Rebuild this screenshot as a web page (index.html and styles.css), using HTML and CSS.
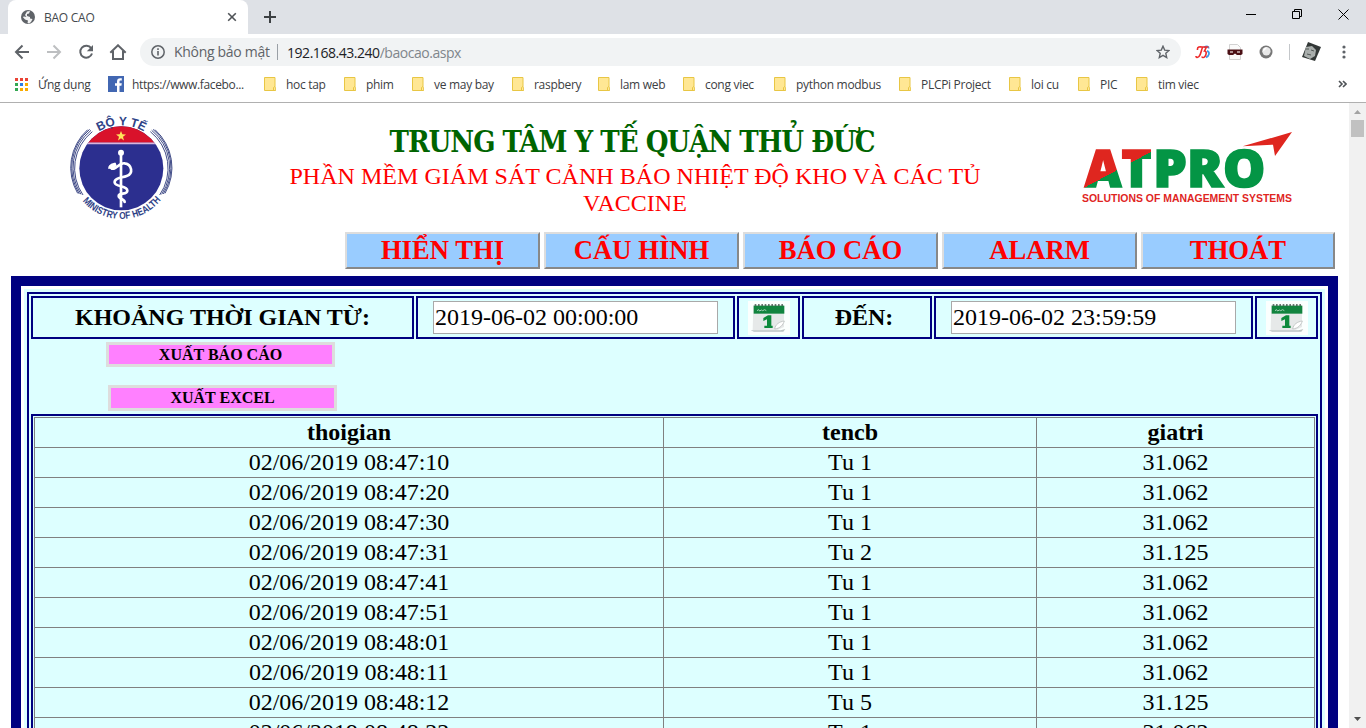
FILE: index.html
```html
<!DOCTYPE html>
<html lang="vi">
<head>
<meta charset="utf-8">
<title>BAO CAO</title>
<link rel="stylesheet" href="styles.css">
</head>
<body>
<svg width="0" height="0" class="defs">
  <defs>
    <symbol id="folder" viewBox="0 0 12 14"><path d="M.5.5h10.500v9l.7.800v3.200H.5z" fill="#ffe794" stroke="#e8c644"/><path d="M9.500 13.500v-3l1.500-1" fill="none" stroke="#e8c644"/></symbol>
    <symbol id="calendar" viewBox="0 0 126 102">
      <rect width="126" height="102" fill="#fbfffe"/>
      <path d="M16 12h92v66l-22 10H14z" fill="#e6e9e9"/>
      <path d="M8 88h90l14-4-6 8H18z" fill="#bcc4c3"/>
      <path d="M17 14h92v24H17z" fill="#12843f"/>
      <path d="M20 12h86" stroke="#3c4f45" stroke-width="5" stroke-dasharray="5 5"/>
      <path d="M27 29l5-3 3 4 5-3 4 2 6-3 5 3" stroke="#a4d2b6" stroke-width="3" fill="none"/>
      <path d="M46 51l14-8h10v31h4v7H49v-7h8V55l-11 5z" fill="#0d8a3c"/>
      <path d="M80 84c2-14 14-22 29-24-4 12-12 22-29 24z" fill="#fff" stroke="#c4c9c8" stroke-width="3"/>
    </symbol>
  </defs>
</svg>
<div class="window">
  <div class="tabstrip">
    <div class="tab">
      <svg width="16" height="16" viewBox="0 0 16 16"><circle cx="8" cy="8" r="7" fill="#5f6368"/><path d="M7 2.500l3-.5-1 2.500-2 .5v2l3 1v1.500l2.500.5-1.500 3-2 1.500-1.500-.5.500-2.500-3-1L2.800 8 4 7.500 6.500 8 5 6z" fill="#fff" opacity=".92"/></svg>
      <span class="tab-title">BAO CAO</span>
      <svg width="10" height="10" viewBox="0 0 10 10"><path d="M1.200 1.200l7.600 7.600M8.800 1.200L1.200 8.800" stroke="#4f5357" stroke-width="1.600"/></svg>
    </div>
    <svg class="plus" width="14" height="14" viewBox="0 0 14 14"><path d="M7 1v12M1 7h12" stroke="#3c4043" stroke-width="2"/></svg>
    <div class="winbtns">
      <svg width="11" height="11" viewBox="0 0 11 11"><path d="M0 5.500h10" stroke="#000"/></svg>
      <svg width="11" height="11" viewBox="0 0 11 11"><path d="M.5 2.500h7v7h-7zM2.500 2.500v-2h7v7h-2" stroke="#000" fill="none"/></svg>
      <svg width="11" height="11" viewBox="0 0 11 11"><path d="M.5.5l10 10M10.500.5l-10 10" stroke="#000"/></svg>
    </div>
  </div>
  <div class="toolbar">
    <svg width="16" height="16" viewBox="0 0 16 16"><path d="M15 8H2.500M8.500 1.500L2 8l6.500 6.500" fill="none" stroke="#5f6368" stroke-width="2"/></svg>
    <svg width="16" height="16" viewBox="0 0 16 16"><path d="M1 8h12.500M7.500 1.500L14 8l-6.500 6.500" fill="none" stroke="#bdbfc1" stroke-width="2"/></svg>
    <svg width="16" height="16" viewBox="0 0 16 16"><path d="M13.200 4.200A6 6 0 1 0 14 9.500" fill="none" stroke="#5f6368" stroke-width="2"/><path d="M15 1v6.200H8.800z" fill="#5f6368"/></svg>
    <svg class="home" width="18" height="16" viewBox="0 0 18 16"><path d="M1.300 8.800L9 1.300l7.700 7.500M4 7v8h10V7" fill="none" stroke="#5f6368" stroke-width="2"/></svg>
    <div class="omnibox">
      <svg width="14" height="14" viewBox="0 0 14 14"><circle cx="7" cy="7" r="6.200" fill="none" stroke="#5f6368" stroke-width="1.500"/><path d="M7 6v4.500M7 3.300v1.600" stroke="#5f6368" stroke-width="1.600"/></svg>
      <span class="unsafe">Không bảo mật</span>
      <span class="url"><span class="host">192.168.43.240</span><span class="path">/baocao.aspx</span></span>
      <svg class="star" width="14" height="14" viewBox="0 0 14 14"><path d="M7 1.200l1.700 3.900 4.300.4-3.200 2.800.9 4.200L7 10.300l-3.700 2.200.9-4.200L1 5.500l4.300-.4z" fill="none" stroke="#5f6368" stroke-width="1.400"/></svg>
    </div>
    <div class="extensions">
      <svg width="16" height="14" viewBox="0 0 16 14"><path d="M9 2.500c3-2 5-1 4.500 1M12 6c2.500.5 2.500 3 1 5l-2 1.500" fill="none" stroke="#3f9be8" stroke-width="1.800"/><path d="M2.500 5C2 1.500 5 1.800 7 2h6.500M8 2C6 4 6.500 9 4 11.500 2.500 13 .8 12.500 1 11M11.500 2L9.500 6c2.500 0 2 4 0 6-1 1-2.500.5-2.500-.5" fill="none" stroke="#ee2a2a" stroke-width="1.600"/></svg>
      <svg width="16" height="16" viewBox="0 0 16 16"><path d="M2.500.5h8l3 3v12h-11z" fill="#fafafa" stroke="#d2d2d2"/><path d="M.5 5.500h15V10l-1.500 1h-4L8 9.500 6 11H2L.5 10z" fill="#4b1015"/><path d="M3 8h3M10 8h3" stroke="#cdb9b9" stroke-width="1.400"/></svg>
      <svg width="14" height="14" viewBox="0 0 14 14"><circle cx="7" cy="7" r="6.500" fill="#777"/><circle cx="7.400" cy="6.300" r="4.200" fill="#e9e9e9"/><path d="M4 6.500A4 4 0 0 1 8 2.500L6 5z" fill="#fff"/></svg>
      <i class="sep"></i>
      <svg class="avatar" width="19" height="20" viewBox="0 0 19 20"><path d="M6 0l13 5-6 14L0 15z" fill="#333837"/><path d="M4 5l6-1 4 4-1 6-5 3-6-3z" fill="#a9aeac"/><path d="M4 7h3M9 8l3 1M5 12l4 1" stroke="#525856"/></svg>
      <svg width="4" height="14" viewBox="0 0 4 14" fill="#5f6368"><circle cx="2" cy="2" r="1.600"/><circle cx="2" cy="7" r="1.600"/><circle cx="2" cy="12" r="1.600"/></svg>
    </div>
  </div>
  <div class="bookmarks">
    <div class="bm apps"><svg width="13" height="13" viewBox="0 0 13 13"><path d="M0 0h3v3H0zM5 0h3v3H5zM10 0h3v3h-3z" fill="#ea4335"/><path d="M0 5h3v3H0zM0 10h3v3H0z" fill="#34a853"/><path d="M5 5h3v3H5z" fill="#2a7de9"/><path d="M10 5h3v3h-3zM5 10h3v3H5zM10 10h3v3h-3z" fill="#f9ab00"/></svg><span>Ứng dụng</span></div>
    <div class="bm fb"><svg width="16" height="16" viewBox="0 0 16 16"><path d="M0 0h16v16H0z" fill="#4267b2"/><path d="M9 16V9.800H7V7.300h2V5.500C9 3.400 10.300 2.300 12.200 2.300h1.600v2.200h-1.200c-.9 0-1.100.5-1.100 1.200v1.600h2.300l-.4 2.500h-1.900V16z" fill="#fff"/></svg><span>https://www.facebo...</span></div>
    <div class="bm"><svg width="12" height="14"><use href="#folder"/></svg><span>hoc tap</span></div>
    <div class="bm"><svg width="12" height="14"><use href="#folder"/></svg><span>phim</span></div>
    <div class="bm"><svg width="12" height="14"><use href="#folder"/></svg><span>ve may bay</span></div>
    <div class="bm"><svg width="12" height="14"><use href="#folder"/></svg><span>raspbery</span></div>
    <div class="bm"><svg width="12" height="14"><use href="#folder"/></svg><span>lam web</span></div>
    <div class="bm"><svg width="12" height="14"><use href="#folder"/></svg><span>cong viec</span></div>
    <div class="bm"><svg width="12" height="14"><use href="#folder"/></svg><span>python modbus</span></div>
    <div class="bm"><svg width="12" height="14"><use href="#folder"/></svg><span>PLCPi Project</span></div>
    <div class="bm"><svg width="12" height="14"><use href="#folder"/></svg><span>loi cu</span></div>
    <div class="bm"><svg width="12" height="14"><use href="#folder"/></svg><span>PIC</span></div>
    <div class="bm"><svg width="12" height="14"><use href="#folder"/></svg><span>tim viec</span></div>
    <svg width="9" height="8" viewBox="0 0 9 8"><path d="M1 1l3 3-3 3M5 1l3 3-3 3" fill="none" stroke="#4f5357" stroke-width="1.600"/></svg>
  </div>
  <div class="viewport">
    <div class="page">
      <header class="banner">
        <svg class="seal" width="125" height="125" viewBox="0 0 375 375">
          <defs>
            <clipPath id="disc"><circle cx="184" cy="193" r="126"/></clipPath>
            <path id="top-arc" d="M53 195a131 131 0 0 1 262 0"/>
            <path id="bottom-arc" d="M32 193a152 152 0 0 0 304 0"/>
          </defs>
          <g clip-path="url(#disc)"><path d="M50 60h270v270H50z" fill="#2c2f8f"/><path d="M50 60h270v56H50z" fill="#d9122b"/><path d="M50 118h270" stroke="#d8b5dc" stroke-width="5"/></g>
          <path d="M183 81l4 10 11 .5-9 7 3 11-9-6.500-9 6.500 3-11-9-7 11-.5z" fill="#ffe45a"/>
          <g fill="none" stroke="#fff">
            <path d="M183 144v166" stroke-width="8"/>
            <path d="M150 188c14 20 26-14 44-10 22 4 27 30 6 38-16 6-38 6-36 20 2 14 38 8 38 24 0 13-26 5-26 16 0 10 18 8 18 18" stroke-width="8" stroke-linecap="round"/>
          </g>
          <circle cx="183" cy="146" r="9" fill="#fff"/><path d="M144 194c2-12 11-18 23-18l3 9-10 9z" fill="#fff"/>
          <g fill="none" stroke="#34407f" stroke-width="2.800">
            <path d="M97 83A140 140 0 0 0 69 273M93 79A144 144 0 0 0 63 271M89 76A149 149 0 0 0 58 270M83 77A153 153 0 0 0 53 268"/>
            <path d="M271 83A140 140 0 0 1 299 273M275 79A144 144 0 0 1 305 271M279 76A149 149 0 0 1 310 270M285 77A153 153 0 0 1 315 268"/>
          </g>
          <text class="seal-top"><textPath href="#top-arc" startOffset="135" textLength="142" lengthAdjust="spacingAndGlyphs">BỘ Y TẾ</textPath></text>
          <text class="seal-bottom"><textPath href="#bottom-arc" startOffset="106" textLength="269" lengthAdjust="spacingAndGlyphs">MINISTRY OF HEALTH</textPath></text>
        </svg>
        <div class="titles">
          <h1>TRUNG TÂM Y TẾ QUẬN THỦ ĐỨC</h1>
          <p>PHẦN MỀM GIÁM SÁT CẢNH BÁO NHIỆT ĐỘ KHO VÀ CÁC TỦ VACCINE</p>
        </div>
        <svg class="atpro" width="235" height="95" viewBox="0 0 705 285">
          <defs><linearGradient id="split" gradientUnits="userSpaceOnUse" x1="32" y1="-55" x2="252" y2="355"><stop offset=".5" stop-color="#df261f"/><stop offset=".5" stop-color="#049545"/></linearGradient></defs>
          <text class="brand" x="44" y="202" textLength="200" lengthAdjust="spacingAndGlyphs" fill="url(#split)" stroke="url(#split)">AT</text>
          <text class="brand" x="250" y="202" textLength="336" lengthAdjust="spacingAndGlyphs" fill="#049545" stroke="#049545">PRO</text>
          <path d="M518 79L666 36l-51 72-6-34z" fill="#df261f"/>
          <text class="slogan" x="36" y="245" textLength="630" lengthAdjust="spacingAndGlyphs">SOLUTIONS OF MANAGEMENT SYSTEMS</text>
        </svg>
      </header>
      <nav class="menu"><button>HIỂN THỊ</button><button>CẤU HÌNH</button><button>BÁO CÁO</button><button>ALARM</button><button>THOÁT</button></nav>
      <main class="outer"><div class="panel"><div class="frame">
        <div class="filters">
          <div class="cell label">KHOẢNG THỜI GIAN TỪ:</div>
          <div class="cell"><input type="text" value="2019-06-02 00:00:00"></div>
          <div class="cell"><svg width="42" height="34"><use href="#calendar"/></svg></div>
          <div class="cell label to">ĐẾN:</div>
          <div class="cell"><input type="text" value="2019-06-02 23:59:59"></div>
          <div class="cell"><svg width="42" height="34"><use href="#calendar"/></svg></div>
        </div>
        <div class="exports"><button class="report">XUẤT BÁO CÁO</button><button class="excel">XUẤT EXCEL</button></div>
        <div class="results"><table>
          <colgroup><col class="c-time"><col class="c-name"><col class="c-value"></colgroup>
          <tr><th>thoigian</th><th>tencb</th><th>giatri</th></tr>
          <tr><td>02/06/2019 08:47:10</td><td>Tu 1</td><td>31.062</td></tr>
          <tr><td>02/06/2019 08:47:20</td><td>Tu 1</td><td>31.062</td></tr>
          <tr><td>02/06/2019 08:47:30</td><td>Tu 1</td><td>31.062</td></tr>
          <tr><td>02/06/2019 08:47:31</td><td>Tu 2</td><td>31.125</td></tr>
          <tr><td>02/06/2019 08:47:41</td><td>Tu 1</td><td>31.062</td></tr>
          <tr><td>02/06/2019 08:47:51</td><td>Tu 1</td><td>31.062</td></tr>
          <tr><td>02/06/2019 08:48:01</td><td>Tu 1</td><td>31.062</td></tr>
          <tr><td>02/06/2019 08:48:11</td><td>Tu 1</td><td>31.062</td></tr>
          <tr><td>02/06/2019 08:48:12</td><td>Tu 5</td><td>31.125</td></tr>
          <tr><td>02/06/2019 08:48:22</td><td>Tu 1</td><td>31.062</td></tr>
        </table></div>
      </div></div></main>
    </div>
    <div class="scrollbar">
      <svg width="17" height="17" viewBox="0 0 17 17"><path d="M5 11l3.500-4 3.500 4z" fill="#a3a3a3"/></svg>
      <i class="thumb"></i>
      <svg class="down" width="17" height="17" viewBox="0 0 17 17"><path d="M5 6l3.500 4L12 6z" fill="#505050"/></svg>
    </div>
  </div>
</div>
</body>
</html>
```
FILE: styles.css
```css
* { box-sizing: border-box; }
body { margin: 0; overflow: hidden; font-family: "Liberation Serif", serif; }
svg { display: block; flex: none; }
button, input { font-family: inherit; margin: 0; border-radius: 0; }
.defs { position: absolute; }
.window { width: 1366px; height: 728px; display: flex; flex-direction: column; overflow: hidden; background: #fff; }

/* browser chrome */
.tabstrip, .toolbar, .bookmarks { font-family: "Open Sans", sans-serif; flex: none; display: flex; align-items: center; }
.tabstrip { height: 34px; background: #dee1e6; padding-left: 8px; }
.tab { width: 240px; height: 34px; background: #fff; border-radius: 8px 8px 0 0; display: flex; align-items: center; padding: 0 11px 0 12px; }
.tab-title { flex: 1; margin-left: 8px; font-size: 12px; letter-spacing: -.25px; color: #45494d; }
.plus { margin-left: 15px; }
.winbtns { margin: -6px 17px 0 auto; display: flex; gap: 35px; }
.toolbar { height: 36px; padding-left: 14px; gap: 16px; }
.home { margin-left: -1px; }
.omnibox { width: 1041px; height: 28px; margin-left: -3px; border-radius: 14px; background: #f1f3f4; display: flex; align-items: center; padding: 0 11px; }
.unsafe { width: 104px; margin-left: 9px; padding-right: 8px; border-right: 1px solid #9aa0a6; font-size: 14px; line-height: 16px; letter-spacing: -.3px; color: #5f6368; white-space: nowrap; }
.url { margin-left: 9px; font-size: 14px; letter-spacing: -.46px; }
.host { color: #202124; }
.path { color: #80868b; }
.star { margin-left: auto; }
.extensions { display: flex; align-items: center; gap: 16px; margin-left: -2px; }
.sep { width: 1px; height: 16px; background: #c4c7ca; }
.avatar { margin: 0 5px 0 -4px; }
.bookmarks { height: 33px; padding: 0 19px 4px 15px; border-bottom: 1px solid #b0b0b0; display: grid; grid-template-columns: 93px 156px 80px 68px 100px 86px 85px 91px 125px 110px 69px 58px 1fr 9px; }
.bm { display: flex; align-items: center; gap: 10px; font-size: 12px; letter-spacing: -.3px; color: #3c4043; white-space: nowrap; }
.fb { gap: 8px; letter-spacing: -.35px; }

/* page */
.viewport { flex: 1; min-height: 0; display: flex; }
.page { width: 1349px; height: 625px; overflow: hidden; }
.scrollbar { width: 17px; background: #f1f1f1; display: flex; flex-direction: column; align-items: center; }
.thumb { width: 13px; height: 17px; background: #c1c1c1; }
.down { margin-top: auto; }
.banner { height: 129px; display: flex; align-items: flex-start; padding: 1px 44px 0 60px; }
.seal-top, .seal-bottom { font-family: "Liberation Sans", sans-serif; font-weight: bold; fill: #2f4387; }
.seal-top { font-size: 37px; }
.seal-bottom { font-size: 30px; }
.titles { width: 720px; margin: 19px 0 0 90px; text-align: center; }
.titles h1 { margin: 0 0 0 -6px; font: bold 29px/38px "DejaVu Serif Condensed", "DejaVu Serif", serif; font-stretch: condensed; letter-spacing: -1px; color: #006400; white-space: nowrap; }
.titles p { margin: 2px 0 0; font-size: 24px; line-height: 27px; letter-spacing: .03px; color: #f00; }
.atpro { margin: 16px 0 0 auto; }
.brand { font: 800 152px "Open Sans", sans-serif; stroke-width: 5px; }
.slogan { font: bold 32px "Liberation Sans", sans-serif; fill: #df261f; }
.menu { display: flex; gap: 4px; margin-left: 345px; }
.menu button { width: 195px; height: 37px; padding: 0 0 2px; border: 2px solid; border-color: #ddd #888 #888 #ddd; background: #9cf; color: #f00; font-size: 26.670px; font-weight: bold; line-height: 30px; }
.menu button:last-child { width: 194px; }
.outer { margin: 7px 11px 0; border: 10px solid navy; padding: 3px; height: 700px; }
.panel { background: #dff; padding: 3px; height: 100%; }
.frame { border: 2px solid navy; padding: 2px; height: 100%; display: flex; flex-direction: column; }
.filters { display: grid; grid-template-columns: 383px 319px 63px 130px 319px 63px; gap: 2px; height: 43px; }
.cell { border: 2px solid navy; display: flex; align-items: center; justify-content: center; }
.cell.label { font-size: 24px; font-weight: bold; }
.cell.to { padding-right: 6px; }
.cell input { width: 285px; height: 33px; border: 1px solid #a9a9a9; padding: 0 0 0 1px; font-size: 24px; background: #fff; color: #000; }
.exports { display: flex; flex-direction: column; gap: 18px; padding: 3px 0 0 75px; height: 75px; }
.exports button { width: 229px; height: 25px; padding: 0; border: 3px solid #ddd; background: #ff80ff; font-size: 16px; font-weight: bold; line-height: 18px; color: #000; }
.exports .excel { margin-left: 2px; height: 26px; }
.results { flex: 1; border: 2px solid navy; border-bottom: 0; padding: 1px; }
.results table { width: 1281px; table-layout: fixed; border-collapse: collapse; font-size: 24px; line-height: 27px; text-align: center; }
.c-time { width: 629px; }
.c-name { width: 373px; }
.results th, .results td { border: 1px solid #808080; padding: 1px; }
```
